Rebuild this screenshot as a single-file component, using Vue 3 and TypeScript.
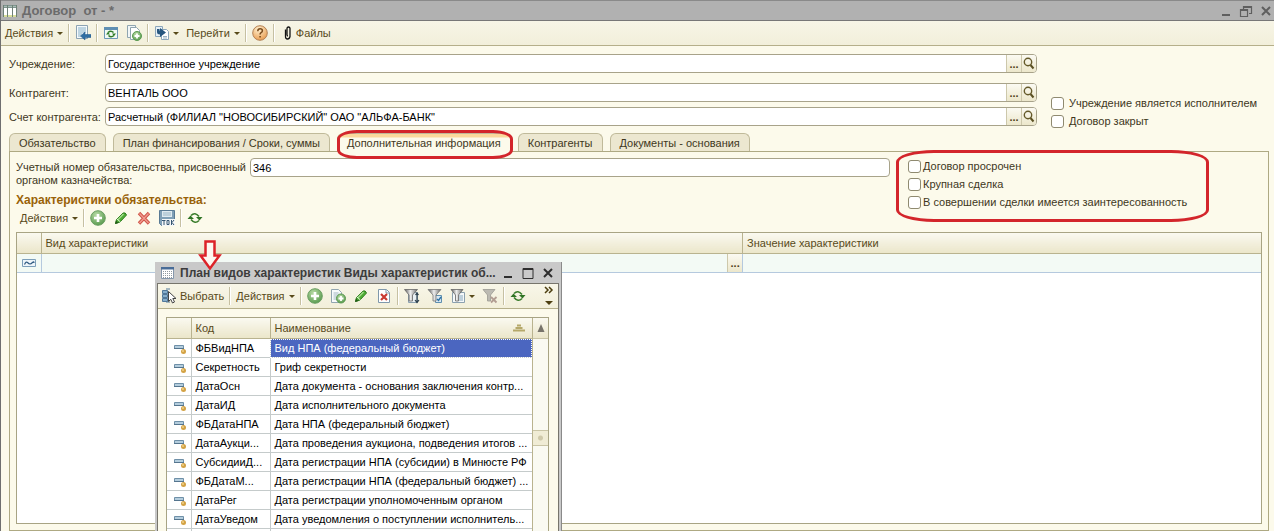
<script setup lang="ts">
import { ref } from 'vue'

interface Field { id: string; label: string; value: string }
interface Check { id: string; label: string; on: boolean }
interface Row { code: string; name: string }

const title = 'Договор  от - *'
const fields = ref<Field[]>([
  { id: 'org', label: 'Учреждение:', value: 'Государственное учреждение' },
  { id: 'partner', label: 'Контрагент:', value: 'ВЕНТАЛЬ ООО' },
  { id: 'account', label: 'Счет контрагента:', value: 'Расчетный (ФИЛИАЛ "НОВОСИБИРСКИЙ" ОАО "АЛЬФА-БАНК"' },
])
const mainChecks = ref<Check[]>([
  { id: 'executor', label: 'Учреждение является исполнителем', on: false },
  { id: 'closed', label: 'Договор закрыт', on: false },
])
const dealChecks = ref<Check[]>([
  { id: 'overdue', label: 'Договор просрочен', on: false },
  { id: 'large', label: 'Крупная сделка', on: false },
  { id: 'interest', label: 'В совершении сделки имеется заинтересованность', on: false },
])
const tabs = ['Обязательство', 'План финансирования / Сроки, суммы', 'Дополнительная информация', 'Контрагенты', 'Документы - основания']
const activeTab = ref(2)
const number = ref('346')
const rows: Row[] = [
  { code: 'ФБВидНПА', name: 'Вид НПА (федеральный бюджет)' },
  { code: 'Секретность', name: 'Гриф секретности' },
  { code: 'ДатаОсн', name: 'Дата документа - основания заключения контр...' },
  { code: 'ДатаИД', name: 'Дата исполнительного документа' },
  { code: 'ФБДатаНПА', name: 'Дата НПА (федеральный бюджет)' },
  { code: 'ДатаАукци...', name: 'Дата проведения аукциона, подведения итогов ...' },
  { code: 'СубсидииД...', name: 'Дата регистрации НПА (субсидии) в Минюсте РФ' },
  { code: 'ФБДатаМ...', name: 'Дата регистрации НПА (федеральный бюджет) ...' },
  { code: 'ДатаРег', name: 'Дата регистрации уполномоченным органом' },
  { code: 'ДатаУведом', name: 'Дата уведомления о поступлении исполнитель...' },
  { code: '', name: '' },
]
const selected = ref(0)
</script>

<template>
  <div class="window">
    <svg class="defs" width="0" height="0" aria-hidden="true">
      <defs>
        <radialGradient id="g-green" cx=".4" cy=".3" r=".8"><stop offset="0" stop-color="#b9dba6" /><stop offset="1" stop-color="#4f9446" /></radialGradient>
        <radialGradient id="g-orange" cx=".4" cy=".25" r=".8"><stop offset="0" stop-color="#fff0cf" /><stop offset="1" stop-color="#e89a4c" /></radialGradient>
        <linearGradient id="g-funnel"><stop offset="0" stop-color="#555" /><stop offset=".45" stop-color="#eee" /><stop offset="1" stop-color="#666" /></linearGradient>
      </defs>
      <symbol id="i-grid" viewBox="0 0 16 16"><path d="M1 2h14v12H1z" fill="#fff" /><path d="M1 2h14v3H1z" fill="#7f9590" /><path d="M1.500 2v12M5.500 2v12M10.500 2v12M14.500 2v12" stroke="#6f8076" /><path d="M2 3.500h3M6 3.500h4M11 3.500h3" stroke="#a9bcb4" /><path d="M2 13h3M6 13h4M11 13h3" stroke="#d9df9c" stroke-width="2" /></symbol>
      <symbol id="i-post" viewBox="0 0 16 16"><path d="M1.500.500h11v13h-11z" fill="#f5f9fb" stroke="#8ca3b3" /><path d="M3 3h8M3 5h8M3 7h8M3 9h4M3 11h3" stroke="#86b0c8" /><path d="M5.500 11l4.500-4v2.500h6v3h-6V15z" fill="#2f6ea3" stroke="#1f5688" stroke-width=".5" /></symbol>
      <symbol id="i-refresh-win" viewBox="0 0 16 16"><path d="M1.500 2.500h13v11h-13z" fill="#f1f9f4" stroke="#6c97b5" /><path d="M1 2h14v3H1z" fill="#5f8fb3" /><path d="M5 7.500q3-2.500 5.500 0M11 10.500q-3 2.500-5.500 0" fill="none" stroke="#2d7a26" stroke-width="1.500" /><path d="M9 8.500h4L11 11zM3 9.500h4L5 7z" fill="#2d7a26" /></symbol>
      <symbol id="i-copy-plus" viewBox="0 0 16 16"><path d="M1.500.500h8v12h-8z" fill="#f2f6f7" stroke="#8fa5b0" /><path d="M4.500 2.500h6l3 3v9h-9z" fill="#fff" stroke="#8fa5b0" /><circle cx="11" cy="11" r="4.500" fill="url(#g-green)" stroke="#5a9a50" /><path d="M11 8.500v5M8.500 11h5" stroke="#fff" stroke-width="1.800" /></symbol>
      <symbol id="i-goto" viewBox="0 0 16 16"><path d="M1.500 1.500h7v10h-7z" fill="#e6f0f6" stroke="#8ca6ba" /><path d="M7.500 4.500h5l2 2v8h-7z" fill="#fff" stroke="#8ca6ba" /><path d="M9 11.500h4M9 13h4" stroke="#9db4c2" /><path d="M3 4v3q0 2.500 3 2.500V12l6-4.500L6 3v3Q5.500 6 5.500 4z" fill="#28577f" /></symbol>
      <symbol id="i-help" viewBox="0 0 16 16"><circle cx="8" cy="8" r="7.300" fill="url(#g-orange)" stroke="#b38257" /><path d="M5.800 6.300q0-2.500 2.300-2.500t2.300 2q0 1.200-1.300 1.900-1 .6-1 1.800" fill="none" stroke="#7a4b1c" stroke-width="1.500" /><path d="M7.300 11h1.600v1.500H7.300z" fill="#7a4b1c" /></symbol>
      <symbol id="i-clip" viewBox="0 0 16 16"><path d="M5.500 4.500v7q0 2.500 2 2.500t2.500-2.500v-8Q10 2 8.500 2T7 3.500v6q0 1.500 1 1.500" fill="none" stroke="#111" stroke-width="1.300" /></symbol>
      <symbol id="i-plus" viewBox="0 0 16 16"><circle cx="8" cy="8" r="7.300" fill="url(#g-green)" stroke="#6a9f62" /><path d="M8 4v8M4 8h8" stroke="#fff" stroke-width="2.600" /></symbol>
      <symbol id="i-pencil" viewBox="0 0 16 16"><path d="M2.500 13.500l1-4 6.500-6.500q2.500-1 3.500 2L7 12z" fill="#4fae35" stroke="#2e7d1f" /><path d="M5 9.500l5.500-5.500" stroke="#a4dd8c" stroke-width="1.500" /><path d="M2 14l1-3.500 2.500 2.500z" fill="#245c18" /><path d="M4 9l3.500 3" stroke="#e7f5dc" /></symbol>
      <symbol id="i-cross" viewBox="0 0 16 16"><path d="M3 3l10 10.500M13 3L3 13.500" stroke="#cf5347" stroke-width="3.400" /><path d="M3.500 3.500l9 9.500M12.500 3.500l-9 9.500" stroke="#f09a8e" stroke-width="1.400" /></symbol>
      <symbol id="i-save" viewBox="0 0 16 16"><path d="M.500.500h15v15h-13l-2-2z" fill="#7f9fb6" stroke="#597a94" /><path d="M3 1h10v6H3z" fill="#dfeaf0" /><path d="M4 3h8M4 5h8" stroke="#9ab5c5" /><path d="M3 9h13v7H3z" fill="#f5f7f8" /><path d="M3 10.500h3.500M5 10.500v4.500M8 10.500h2v4H8zM12.500 10v5M15 10l-2 2.500 2 2.500" fill="none" stroke="#355672" /></symbol>
      <symbol id="i-refresh" viewBox="0 0 16 16"><path d="M4 5.500q4-4 8 1M12 10.500q-4 4-8-1" fill="none" stroke="#3a7d2c" stroke-width="1.600" /><path d="M9 7h6.500l-3 3.500zM.500 9H7L3.500 5.500z" fill="#2f7424" /></symbol>
      <symbol id="i-pick" viewBox="0 0 16 16"><path d="M1.500 2.500h5v3h-5zM1.500 6.500h5v3h-5zM1.500 10.500h5v3h-5z" fill="#86aecb" stroke="#51789a" /><path d="M5 1h4M5 14h4" stroke="#51789a" /><path d="M7.500 3.500v10l2.300-2.200 1.700 3.700 2-1-1.700-3.500H15z" fill="#fff" stroke="#444" /></symbol>
      <symbol id="i-doc-plus" viewBox="0 0 16 16"><path d="M1.500 1.500h7l3 3v10h-10z" fill="#f7fafb" stroke="#91a5b0" /><path d="M3.500 5h5M3.500 7h6M3.500 9h4M3.500 11h3" stroke="#a3b7c2" /><circle cx="11" cy="10.500" r="4.500" fill="url(#g-green)" stroke="#5a9a50" /><path d="M11 8v5M8.500 10.500h5" stroke="#fff" stroke-width="1.800" /></symbol>
      <symbol id="i-doc-x" viewBox="0 0 16 16"><path d="M2.500 1.500h8l3 3v10h-11z" fill="#fff" stroke="#7f98ab" /><path d="M10 2v3h3" fill="none" stroke="#7f98ab" /><path d="M5 6l6 6M11 6l-6 6" stroke="#c93a32" stroke-width="2.200" /></symbol>
      <symbol id="i-filter-move" viewBox="0 0 16 16"><path d="M4.500 4.500h9v10h-9z" fill="#e9f0f4" stroke="#8ba0ae" /><path d="M.500 1.500h13L8.500 7v6H5V7z" fill="url(#g-funnel)" stroke="#666" stroke-width=".8" /><path d="M13 5v9M11.500 7L13 5l1.500 2M11 12l2 2.500 2-2.500" fill="none" stroke="#2c3f4c" stroke-width="1.200" /></symbol>
      <symbol id="i-filter-check" viewBox="0 0 16 16"><path d="M8.500 7.500h6v7h-6z" fill="#d9e8f2" stroke="#5f8eaf" /><path d="M1 1.500h13L9 7v6H6V7z" fill="url(#g-funnel)" stroke="#777" stroke-width=".8" /><path d="M10 11l1.500 1.500L14 9" fill="none" stroke="#2b72a6" stroke-width="1.400" /></symbol>
      <symbol id="i-filter-list" viewBox="0 0 16 16"><path d="M2.500 4.500h12v10h-12z" fill="#f5f8fa" stroke="#8ba0ae" /><path d="M9 8h4M9 10h4M9 12h4" stroke="#87a8be" /><path d="M1 1.500h12L8.500 7v6h-3V7z" fill="url(#g-funnel)" stroke="#666" stroke-width=".8" /></symbol>
      <symbol id="i-filter-off" viewBox="0 0 16 16"><path d="M1 1.500h12L8.500 7v6h-3V7z" fill="#bcbab2" stroke="#9b9992" stroke-width=".8" /><path d="M9 9l5.500 5.500M14.500 9L9 14.500" stroke="#b29d92" stroke-width="1.800" /></symbol>
      <symbol id="i-list" viewBox="0 0 16 16"><path d="M2.500 2.500h12v11h-12z" fill="#fff" stroke="#8597ab" /><path d="M2 2h13v2.500H2z" fill="#486c97" /><path d="M4 6.500h9M4 8.500h9M4 10.500h9M4 12.500h9" stroke="#90999f" stroke-dasharray="1 1" /></symbol>
      <symbol id="i-item" viewBox="0 0 16 16"><path d="M2.500 5.500h9v3h-9z" fill="#b4cddd" stroke="#6f90a8" /><path d="M2 8.500h10" stroke="#55758e" /><circle cx="11.500" cy="11.500" r="2.500" fill="#d3a244" /><circle cx="11" cy="11" r="1" fill="#efd08a" /></symbol>
      <symbol id="i-lens" viewBox="0 0 16 16"><circle cx="7" cy="6" r="3.700" fill="none" stroke="#655a2a" stroke-width="1.400" /><path d="M9.500 9L12.500 12.500" stroke="#5b5022" stroke-width="2" /></symbol>
      <symbol id="i-min" viewBox="0 0 16 16"><path d="M4 12h8" stroke="currentColor" stroke-width="2" /></symbol>
      <symbol id="i-restore" viewBox="0 0 16 16"><path d="M5.500 6V3.500h8v7H11M2.500 6.500h7v7h-7zM2.500 7.500h7M5.500 4.500h8" fill="none" stroke="currentColor" stroke-width="1.200" /></symbol>
      <symbol id="i-max" viewBox="0 0 16 16"><path d="M3 3.500h10v10H3zM3 4.500h10" fill="none" stroke="currentColor" /></symbol>
      <symbol id="i-close" viewBox="0 0 16 16"><path d="M4 4l8 8M12 4l-8 8" stroke="currentColor" stroke-width="2" /></symbol>
    </svg>

    <header class="titlebar">
      <svg class="ic"><use href="#i-grid" /></svg>
      <h1>{{ title }}</h1>
      <button aria-label="Свернуть"><svg class="ic"><use href="#i-min" /></svg></button>
      <button aria-label="Восстановить"><svg class="ic"><use href="#i-restore" /></svg></button>
      <button aria-label="Закрыть"><svg class="ic"><use href="#i-close" /></svg></button>
    </header>

    <div class="toolbar main-tools">
      <button>Действия<i class="caret" /></button>
      <span class="sep" />
      <button aria-label="Записать"><svg class="ic"><use href="#i-post" /></svg></button>
      <span class="sep" />
      <button aria-label="Перечитать"><svg class="ic"><use href="#i-refresh-win" /></svg></button>
      <button aria-label="Скопировать"><svg class="ic"><use href="#i-copy-plus" /></svg></button>
      <span class="sep" />
      <button class="tight" aria-label="Ввести на основании"><svg class="ic"><use href="#i-goto" /></svg><i class="caret" /></button>
      <button>Перейти<i class="caret" /></button>
      <span class="sep" />
      <button aria-label="Справка"><svg class="ic"><use href="#i-help" /></svg></button>
      <span class="sep" />
      <button class="tight"><svg class="ic"><use href="#i-clip" /></svg>Файлы</button>
    </div>

    <main class="form">
      <div class="head">
        <div class="fields">
          <div v-for="f in fields" :key="f.id" class="field">
            <label :for="f.id">{{ f.label }}</label>
            <div class="box">
              <input :id="f.id" v-model="f.value" type="text">
              <button class="dots" aria-label="Выбрать">...</button>
              <button class="lens" aria-label="Открыть"><svg class="ic"><use href="#i-lens" /></svg></button>
            </div>
          </div>
        </div>
        <div class="checks main-checks">
          <label v-for="c in mainChecks" :key="c.id"><input v-model="c.on" type="checkbox">{{ c.label }}</label>
        </div>
      </div>

      <div class="tabs" role="tablist">
        <button v-for="(t, i) in tabs" :key="t" role="tab" :aria-selected="i === activeTab" :class="{ active: i === activeTab }" @click="activeTab = i">
          {{ t }}<span v-if="i === 2" class="mark" />
        </button>
      </div>

      <section class="panel">
        <div class="top">
          <label for="number" class="number-label">Учетный номер обязательства, присвоенный органом казначейства:</label>
          <div class="box number"><input id="number" v-model="number" type="text"></div>
          <div class="checks deal-checks">
            <label v-for="c in dealChecks" :key="c.id"><input v-model="c.on" type="checkbox">{{ c.label }}</label>
            <span class="mark" />
          </div>
        </div>
        <h2>Характеристики обязательства:</h2>
        <div class="toolbar sub-tools">
          <button>Действия<i class="caret" /></button>
          <span class="sep" />
          <button aria-label="Добавить"><svg class="ic"><use href="#i-plus" /></svg></button>
          <button aria-label="Изменить"><svg class="ic"><use href="#i-pencil" /></svg></button>
          <button aria-label="Удалить"><svg class="ic"><use href="#i-cross" /></svg></button>
          <button aria-label="Закончить редактирование"><svg class="ic"><use href="#i-save" /></svg></button>
          <span class="sep" />
          <button aria-label="Обновить"><svg class="ic"><use href="#i-refresh" /></svg></button>
        </div>
        <div class="grid-box">
          <table class="props">
            <colgroup><col class="c-mark"><col class="c-kind"><col></colgroup>
            <thead><tr><th /><th>Вид характеристики</th><th>Значение характеристики</th></tr></thead>
            <tbody>
              <tr>
                <td class="mark-cell"><svg class="wave" viewBox="0 0 14 8"><path d="M.500.500h13v7H.500z" fill="#eef5fa" stroke="#7d9fba" /><path d="M2.500 5.500Q4 2 5.500 3.500T8 5t2.500-1.500T12 4" fill="none" stroke="#2f5a82" stroke-width="1.200" /></svg></td>
                <td class="pick-cell"><button class="dots" aria-label="Выбрать">...</button></td>
                <td />
              </tr>
            </tbody>
          </table>
        </div>
      </section>
    </main>

    <div class="dialog" role="dialog" aria-labelledby="dialog-title">
      <header class="dialog-title">
        <svg class="ic"><use href="#i-list" /></svg>
        <h2 id="dialog-title">План видов характеристик Виды характеристик об...</h2>
        <button aria-label="Свернуть"><svg class="ic"><use href="#i-min" /></svg></button>
        <button aria-label="Развернуть"><svg class="ic"><use href="#i-max" /></svg></button>
        <button aria-label="Закрыть"><svg class="ic"><use href="#i-close" /></svg></button>
      </header>
      <div class="dialog-body">
        <div class="toolbar dialog-tools">
          <button class="tight"><svg class="ic"><use href="#i-pick" /></svg>Выбрать</button>
          <span class="sep" />
          <button>Действия<i class="caret" /></button>
          <span class="sep" />
          <button aria-label="Добавить"><svg class="ic"><use href="#i-plus" /></svg></button>
          <button aria-label="Скопировать"><svg class="ic"><use href="#i-doc-plus" /></svg></button>
          <button aria-label="Изменить"><svg class="ic"><use href="#i-pencil" /></svg></button>
          <button aria-label="Пометить на удаление"><svg class="ic"><use href="#i-doc-x" /></svg></button>
          <span class="sep" />
          <button aria-label="Отбор и сортировка"><svg class="ic"><use href="#i-filter-move" /></svg></button>
          <button aria-label="Отбор по значению"><svg class="ic"><use href="#i-filter-check" /></svg></button>
          <button class="tight" aria-label="История отборов"><svg class="ic"><use href="#i-filter-list" /></svg><i class="caret" /></button>
          <button aria-label="Отключить отбор"><svg class="ic"><use href="#i-filter-off" /></svg></button>
          <span class="sep" />
          <button aria-label="Обновить"><svg class="ic"><use href="#i-refresh" /></svg></button>
          <button class="more" aria-label="Ещё"><svg viewBox="0 0 10 20"><path d="M1 1l3 3-3 3M5 1l3 3-3 3" fill="none" stroke="#4d3f10" stroke-width="1.500" /><path d="M1 15h8l-4 4z" fill="#4d3f10" /></svg></button>
        </div>
        <div class="list">
          <table class="kinds">
            <colgroup><col class="c-mark"><col class="c-code"><col></colgroup>
            <thead><tr><th /><th>Код</th><th><div class="sorted">Наименование<svg viewBox="0 0 12 8"><path d="M4 1.500h4M2.500 4h7M0 6.500h12" stroke="#b5a869" stroke-width="2" /></svg></div></th></tr></thead>
            <tbody>
              <tr v-for="(r, i) in rows" :key="i" :class="{ picked: i === selected }" @click="selected = i">
                <td class="mark-cell"><svg class="ic"><use href="#i-item" /></svg></td>
                <td>{{ r.code }}</td>
                <td>{{ r.name }}</td>
              </tr>
            </tbody>
          </table>
          <div class="scroll">
            <button class="up" aria-label="Вверх"><svg viewBox="0 0 8 8"><path d="M4 0l3.500 8h-7z" fill="#77736a" /></svg></button>
            <span class="thumb" />
          </div>
        </div>
      </div>
      <svg class="arrow" viewBox="0 0 24 32"><path d="M7.500 2.500h9v14h5L12 29.500 2.500 16.500h5z" fill="#fdf7f0" stroke="#dc2228" stroke-width="2.500" /></svg>
    </div>
  </div>
</template>

<style>
body { margin: 0; }
</style>

<style scoped>
.window {
  position: relative; display: flex; flex-direction: column; box-sizing: border-box;
  min-height: 100vh; overflow: hidden; border-left: 1px solid #6f6f6f;
  background: #fcfaeb; color: #40371c; font: 11px/13px "Liberation Sans", Arial, sans-serif;
}
button, input { font: inherit; color: inherit; }
button { margin: 0; padding: 0; border: 0; background: none; }
h1, h2 { margin: 0; font-size: 12px; line-height: 14px; }
.defs { position: absolute; }
.ic { display: block; flex: none; width: 16px; height: 16px; }

.titlebar { display: flex; align-items: center; height: 21px; box-sizing: border-box; padding: 0 0 0 1px; border-top: 1px solid #8a8a8a; border-bottom: 1px solid #777; background: #b1b1b1; color: #5f5f5f; }
.titlebar h1 { flex: 1; margin-left: 4px; font-size: 13px; white-space: pre; color: #6b6b6b; }
.titlebar button { margin-left: 4px; }

.toolbar { display: flex; align-items: center; gap: 7px; color: #584a1a; }
.toolbar button { display: flex; align-items: center; gap: 4px; white-space: nowrap; }
.toolbar .tight { gap: 3px; }
.caret { width: 0; border: 3px solid transparent; border-top-color: #584a1a; border-bottom: 0; }
.sep { width: 1px; height: 18px; margin: 0 -2px; border-right: 1px solid #fff; background: #c6c0a2; }
.main-tools { height: 24px; padding-left: 4px; border-bottom: 1px solid #b5af8a; background: linear-gradient(#f7f5e6, #f2efda); }
.main-tools .tight:last-child { gap: 0; }

.form { display: flex; flex: 1; flex-direction: column; padding: 8px 5px 0 8px; }
.head { display: flex; gap: 14px; }
.fields { flex: 1; }
.field { display: flex; align-items: center; height: 19px; margin-bottom: 5px; }
.field:first-child { margin-bottom: 10px; }
.field label { width: 96px; flex: none; padding-top: 1px; white-space: nowrap; }
.box { display: flex; flex: 1; box-sizing: border-box; height: 19px; overflow: hidden; border: 1px solid #a8a38a; border-radius: 4px; background: #fff; color: #000; }
.box input { flex: 1; min-width: 0; padding: 2px 2px 0; border: 0; outline: 0; background: none; }
.dots { width: 15px; border-left: 1px solid #cdc8ab; background: linear-gradient(#fbfaf2, #ece7cb); color: #4d4119; font-weight: bold; line-height: 19px; text-align: center; }
.lens { width: 15px; border-left: 1px solid #cdc8ab; background: linear-gradient(#fbfaf2, #ece7cb); }
.lens .ic { margin-left: -1px; }
.checks { display: flex; flex-direction: column; gap: 5px; }
.checks label { display: flex; align-items: center; height: 13px; white-space: nowrap; }
.checks input { appearance: none; flex: none; width: 13px; height: 13px; margin: 0; border: 1px solid #8f8a70; border-radius: 3px; background: #fff; }
.checks input:checked { background: #5169c4; }
.main-checks { width: 218px; padding-top: 43px; }
.main-checks input { margin-right: 5px; }

.tabs { display: flex; gap: 7px; height: 18px; margin-top: 2px; }
.tabs button { position: relative; height: 18px; padding: 1px 9px 0; border: 1px solid #c0ba9a; border-bottom: 0; border-radius: 6px 6px 0 0; background: #ece7d0; white-space: nowrap; }
.tabs .active { z-index: 1; height: 19px; background: linear-gradient(#fbd99c 3px, #fcfaeb 4px); }
.mark { position: absolute; border: 3px solid #d3252b; pointer-events: none; }
.tabs .mark { inset: -4px -3px -7px -1px; border-radius: 20px / 9px; }

.panel { display: flex; flex: 1; flex-direction: column; padding: 6px 6px; border: 1px solid #aea983; }
.top { display: flex; align-items: flex-start; }
.number-label { width: 234px; flex: none; margin-top: 3px; }
.number { margin-right: 18px; }
.deal-checks { position: relative; width: 354px; padding-top: 2px; }
.deal-checks input { margin-right: 2px; }
.deal-checks .mark { inset: -8px 53px -13px -12px; border-radius: 38px / 12px; }
.panel h2 { margin-top: -16px; color: #996208; }
.sub-tools { height: 22px; padding-left: 4px; }
.grid-box { flex: 1; margin-top: 3px; border: 1px solid #a8a484; background: #fff; }
table { width: 100%; border-collapse: collapse; table-layout: fixed; }
th { height: 18px; padding: 0 4px; border-right: 1px solid #b9b38f; border-bottom: 1px solid #b9b38f; background: linear-gradient(#faf9f0, #ebe6ca); color: #584a1a; font-weight: normal; text-align: left; }
td { height: 18px; padding: 0 4px; white-space: nowrap; }
.c-mark { width: 24px; }
.c-kind { width: 56.4%; }
.props th { height: 20px; }
.props td { border-right: 1px solid #b5c9de; border-bottom: 1px solid #b5c9de; background: #f3faf5; }
.props td.pick-cell, .kinds td.mark-cell, .props td.mark-cell { padding: 0; }
.wave { display: block; width: 14px; height: 8px; margin: 0 auto; }
.pick-cell .dots { display: block; height: 18px; margin-left: auto; }

.dialog { position: absolute; top: 262px; left: 154px; box-sizing: border-box; width: 407px; height: 290px; padding: 0 2px; background: #c9c9c9; border-right: 1px solid #8a8a8a; color: #000; }
.dialog-title { display: flex; align-items: center; height: 20px; padding: 1px 3px 0 2px; color: #2e2e2e; }
.dialog-title h2 { flex: 1; margin-left: 5px; overflow: hidden; color: #3c3c3c; white-space: nowrap; }
.dialog-title button { margin-left: 4px; }
.dialog-body { height: 268px; border: 1px solid #77756c; background: #fcfaeb; }
.dialog-tools { height: 24px; padding: 0 4px 0 3px; border-bottom: 1px solid #b5af8a; background: linear-gradient(#f8f6e8, #f2efda); }
.toolbar .more { margin-left: auto; }
.more svg { width: 10px; height: 20px; }
.list { display: flex; margin: 8px 9px 0 8px; border: 1px solid #a8a484; background: #fff; }
.kinds { flex: 1; width: 0; }
.c-code { width: 79px; }
.kinds th { height: 20px; }
.kinds td { border-right: 1px solid #c5cbcb; border-bottom: 1px solid #c5cbcb; }
.props th:last-child, .props td:last-child, .kinds th:last-child, .kinds td:last-child { border-right: 0; }
.kinds .mark-cell .ic { margin-left: 5px; }
.sorted { display: flex; align-items: center; justify-content: space-between; padding-right: 3px; }
.sorted svg { width: 12px; height: 8px; }
.picked td:last-child { outline: 1px dotted #fff; outline-offset: -1px; background: #4b66c0; color: #fff; }
.scroll { width: 15px; border-left: 1px solid #b9b38f; background: #fafaf2; }
.scroll .up { display: flex; align-items: center; justify-content: center; width: 100%; height: 21px; border-bottom: 1px solid #c9c4a5; background: linear-gradient(#faf9f0, #ebe6ca); }
.up svg { width: 8px; height: 8px; }
.thumb { display: block; box-sizing: border-box; height: 16px; margin-top: 91px; border: 1px solid #c9c4a5; border-width: 1px 0; background: radial-gradient(circle, #cfc9aa 2px, transparent 3px), #f0ecd5; }
.arrow { position: absolute; top: -23px; left: 43px; width: 24px; height: 32px; }
</style>
